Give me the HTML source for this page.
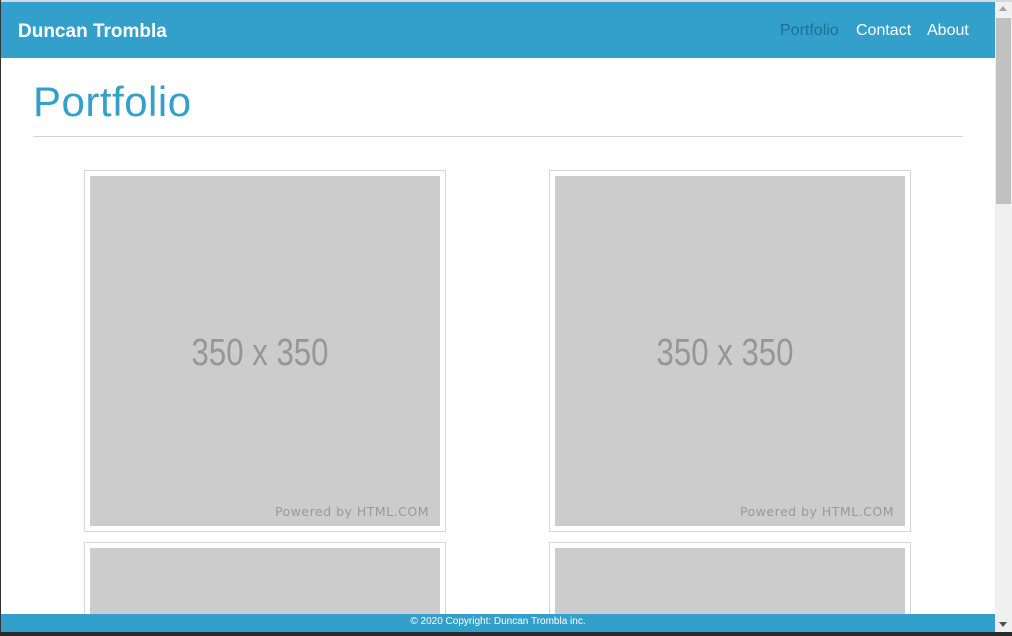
<!DOCTYPE html>
<html><head><meta charset="utf-8"><style>
*{margin:0;padding:0;box-sizing:border-box}
html,body{width:1012px;height:636px;overflow:hidden;background:#fff;font-family:"Liberation Sans",sans-serif}
#w{position:relative;width:1012px;height:636px;overflow:hidden}
.topb{position:absolute;left:0;top:0;width:1012px;height:2px;background:#d8d8d8}
.leftb{position:absolute;left:0;top:0;width:1px;height:636px;background:#333}
.nav{position:absolute;left:1px;top:2px;width:994px;height:56px;background:#33a0cc}
.brand{position:absolute;left:17px;top:19px;color:#fff;font-weight:bold;font-size:19px}
.links{position:absolute;top:20px;font-size:16px;color:#fff}
h1{position:absolute;left:33px;top:78px;font-size:42px;font-weight:normal;color:#33a0cc;letter-spacing:0.5px}
.hr{position:absolute;left:33px;top:136px;width:930px;height:1px;background:#d3d3d3}
.card{position:absolute;width:362px;height:362px;border:1px solid #d6d6d6;background:#fff}
.img{position:absolute;left:5px;top:5px;width:350px;height:350px;background:#ccc;overflow:hidden}
.big{position:absolute;left:-5px;width:350px;top:156px;text-align:center;font-size:38px;color:#969696;transform:scaleX(0.82)}
.pw{position:absolute;right:11px;top:328px;color:#999;letter-spacing:0.5px;font-family:"DejaVu Sans",sans-serif;font-size:12.5px}
.sb{position:absolute;left:995px;top:2px;width:17px;height:630px;background:#f0f0f0}
.thumb{position:absolute;left:996px;top:18px;width:15px;height:186px;background:#c1c1c1}
.foot{position:absolute;left:1px;top:614px;width:994px;height:18px;background:#33a0cc;color:#fff;font-size:10px;text-align:center;line-height:16px}
.bot{position:absolute;left:0;top:632px;width:1012px;height:4px;background:#2a2a2a}
</style></head><body><div id="w">
<div class="topb"></div><div class="leftb"></div>
<div class="nav"><div class="brand">Duncan Trombla</div>
<span class="links" style="left:779px;color:#1f6f93">Portfolio</span>
<span class="links" style="left:855px">Contact</span>
<span class="links" style="left:926px">About</span></div>
<h1>Portfolio</h1><div class="hr"></div>
<div class="card" style="left:84px;top:170px"><div class="img"><div class="big">350 x 350</div><div class="pw">Powered by HTML.COM</div></div></div>
<div class="card" style="left:549px;top:170px"><div class="img"><div class="big">350 x 350</div><div class="pw">Powered by HTML.COM</div></div></div>
<div class="card" style="left:84px;top:542px;height:72px;border-bottom:0"><div class="img" style="height:67px"></div></div>
<div class="card" style="left:549px;top:542px;height:72px;border-bottom:0"><div class="img" style="height:67px"></div></div>
<div class="sb"></div><div class="thumb"></div>
<div style="position:absolute;left:999px;top:6px;width:0;height:0;border-left:4px solid transparent;border-right:4px solid transparent;border-bottom:5px solid #a3a3a3"></div>
<div style="position:absolute;left:999px;top:622px;width:0;height:0;border-left:4px solid transparent;border-right:4px solid transparent;border-top:5px solid #505050"></div>
<div class="foot">© 2020 Copyright: Duncan Trombla inc.</div>
<div class="bot"></div>
</div></body></html>
